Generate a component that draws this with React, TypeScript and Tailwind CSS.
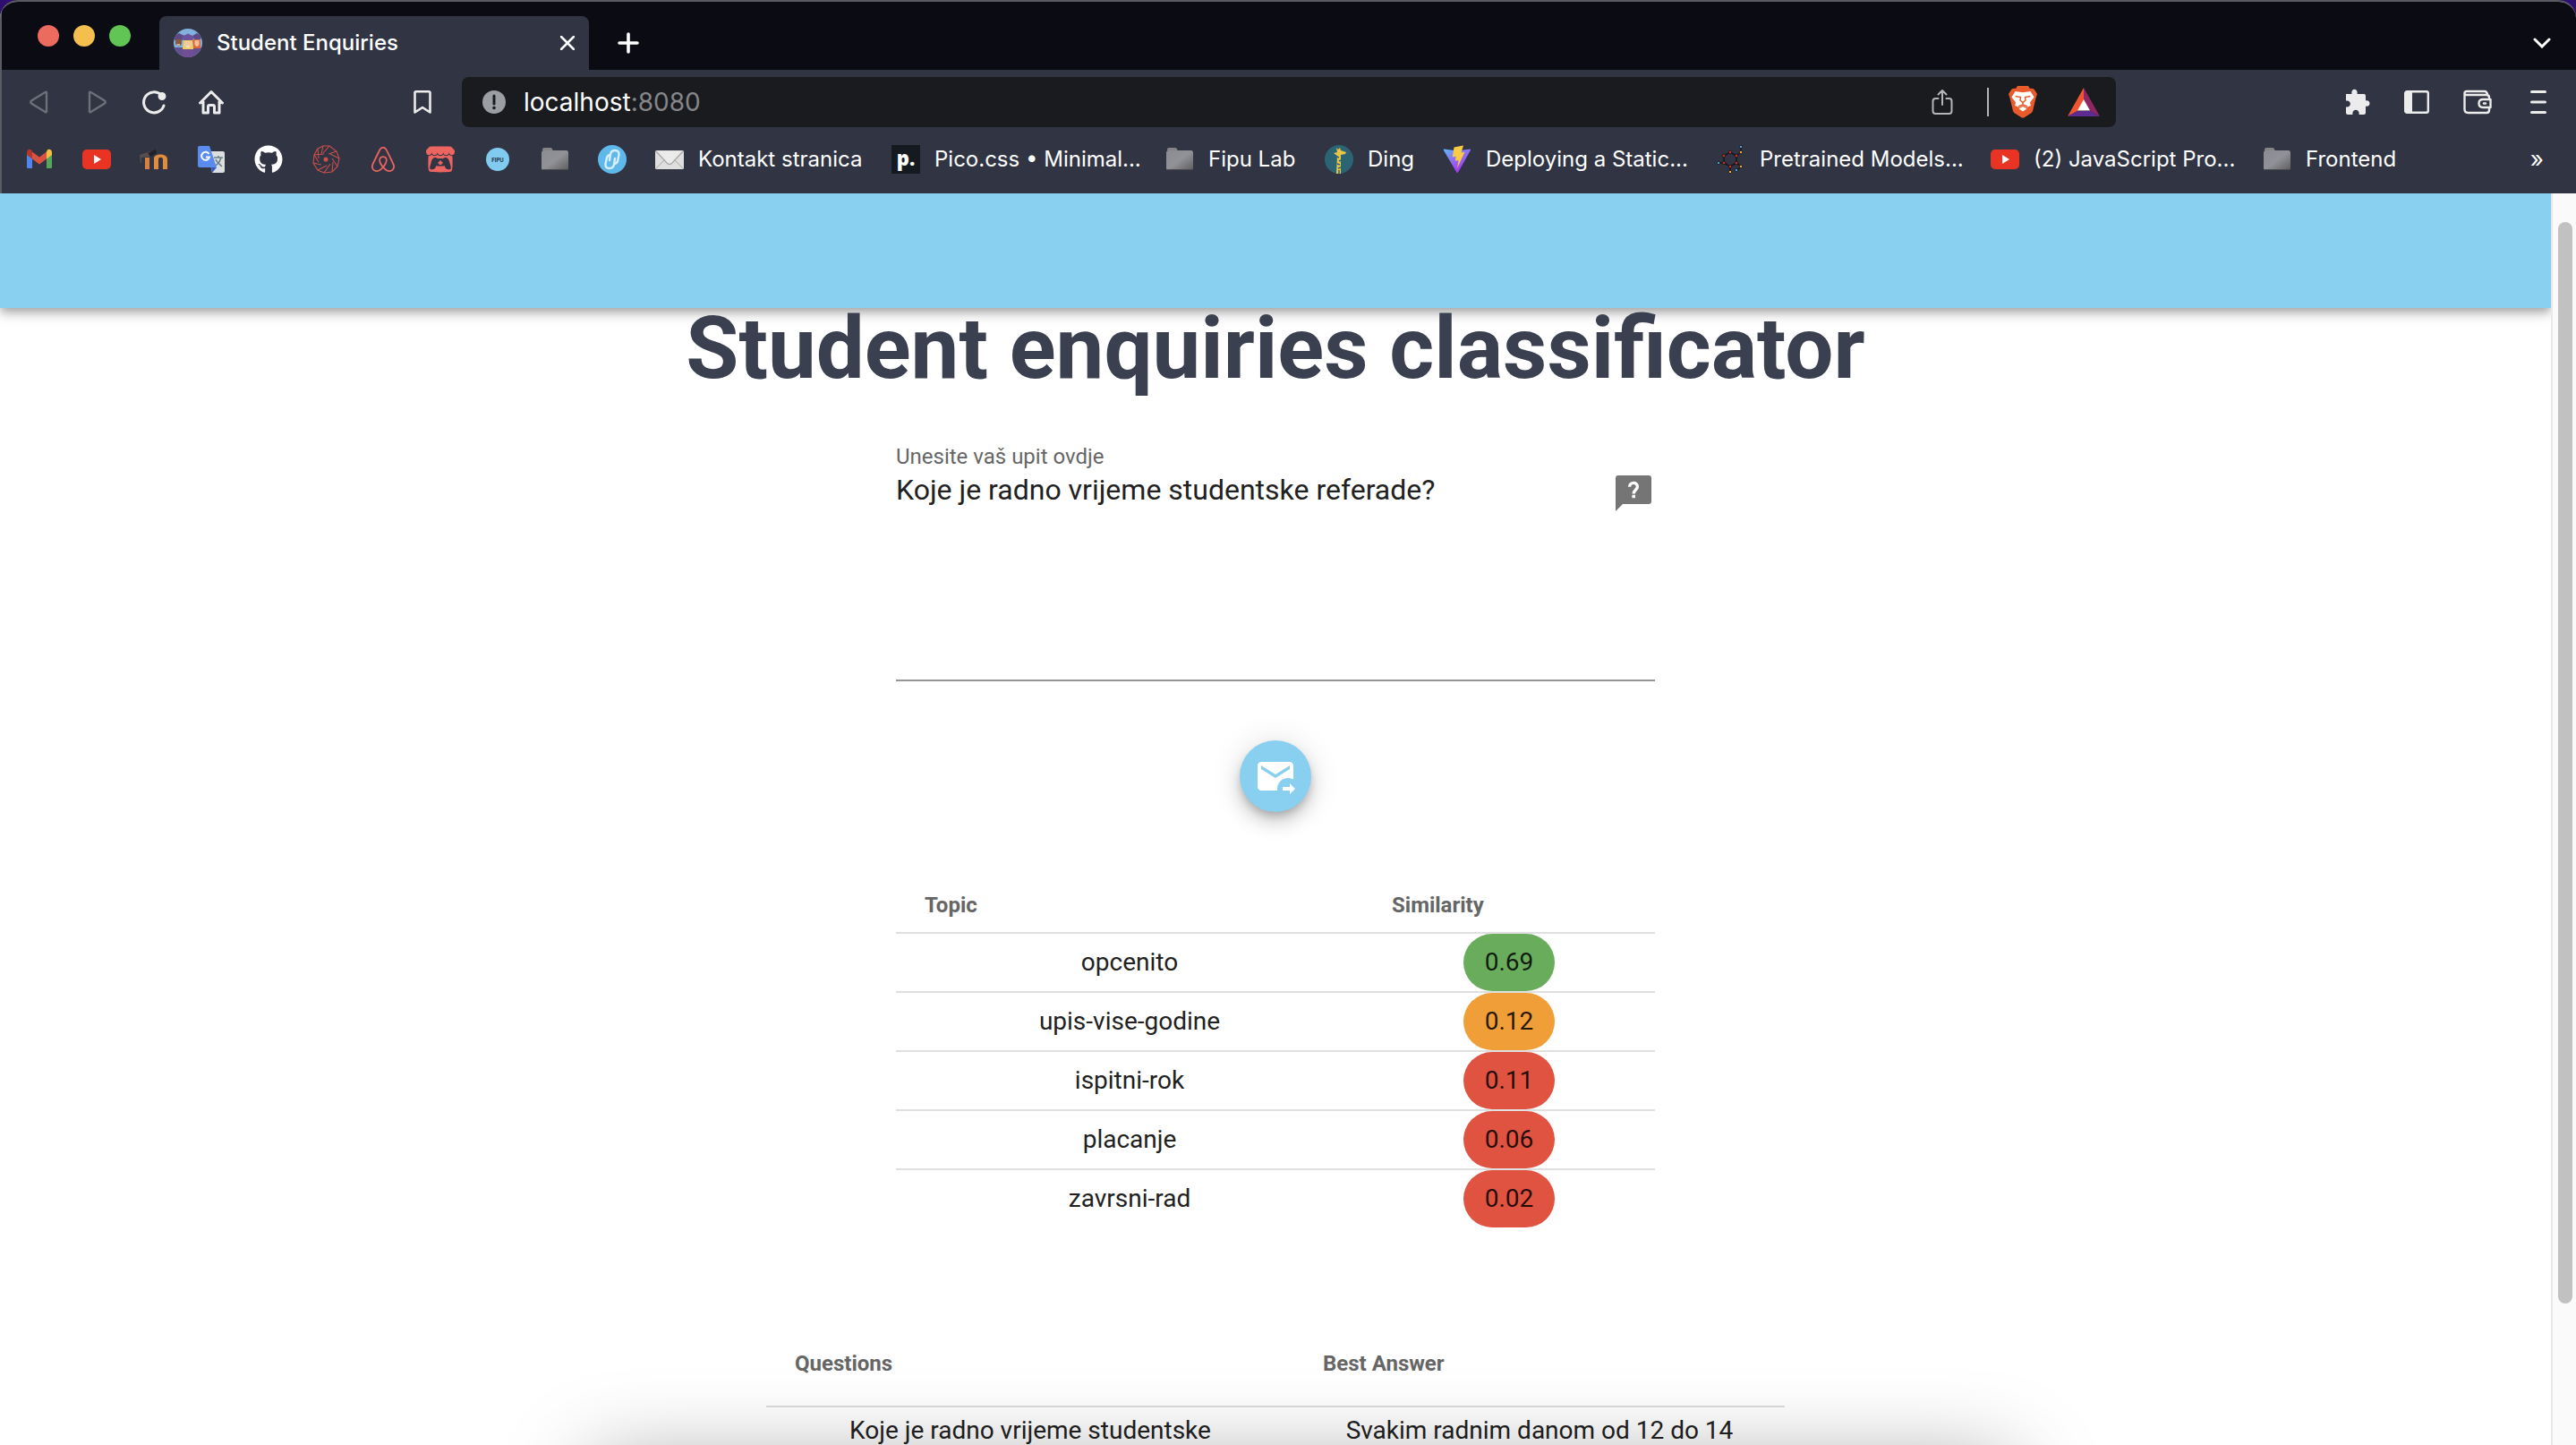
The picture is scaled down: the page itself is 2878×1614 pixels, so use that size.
import React from "react";
import { FaGithub, FaAirbnb } from "react-icons/fa";
import { SiItchdotio } from "react-icons/si";

type Bookmark = { label?: string; name: string; icon: React.ReactNode; width?: string };

const Gmail = () => (
  <svg viewBox="0 0 32 32" className="size-8">
    <path d="M2 9v15.500a1.500 1.500 0 0 0 1.500 1.500H8V13.500z" fill="#5383ec" />
    <path d="M30 9v15.500a1.500 1.500 0 0 1-1.500 1.500H24V13.500z" fill="#58a55c" />
    <path d="M24 7.500v8l6-4.500V8c0-3-3-4.200-5-2.700z" fill="#f1bf42" />
    <path d="M8 15.500v-8l8 6 8-6v8l-8 6z" fill="#d95140" />
    <path d="M2 8v3l6 4.500v-8L7 5.300C5 3.800 2 5 2 8z" fill="#b3362b" />
  </svg>
);

const YouTube = () => (
  <svg viewBox="0 0 32 32" className="size-8">
    <rect x="0" y="5" width="32" height="22" rx="5" fill="#e93323" />
    <path d="M13 11l8 5-8 5z" fill="#fff" />
  </svg>
);

const Moodle = () => (
  <svg viewBox="0 0 32 32" className="size-8">
    <path d="M0 11l12-4 5 2-6 4-9 1v6H1z" fill="#55504f" />
    <path d="M9 9l9-4 1 4-7 4z" fill="#222226" />
    <path d="M6 14h5v13H6z" fill="#d9813a" />
    <path d="M16 27V15c0-6 15-6 15 1v11h-5V16c0-3-5-3-5 0v11z" fill="#e08c3c" />
  </svg>
);

const Translate = () => (
  <svg viewBox="0 0 32 32" className="size-8">
    <path d="M12 7h17a2 2 0 0 1 2 2v20a2 2 0 0 1-2 2H17z" fill="#dcdfe0" />
    <path d="M16 25h6l-5 6z" fill="#3555c4" />
    <path d="M3 1h11l8 24H3a2 2 0 0 1-2-2V3a2 2 0 0 1 2-2z" fill="#5a8bee" />
    <path d="M13.500 10A4.500 4.500 0 1 0 14 13.500H10" fill="none" stroke="#fff" strokeWidth="2" />
    <path d="M19 14h10M24 12v2M27 14c-1 5-4 7-6 9M21 16c1 3 4 5 7 8" fill="none" stroke="#6b8088" strokeWidth="1.600" />
  </svg>
);

const Aperture = () => (
  <svg viewBox="0 0 32 32" className="size-8" fill="none" stroke="#c8504a" strokeWidth="1.100">
    <path d="M13 1h7l8 6 3 8-2 9-6 6-9 1-7-3-5-8 1-9 4-7z" />
    <path d="M13 1l-2 9M20 1l-7 8M28 7l-9 3M31 15l-10-5M29 24l-6-9M23 30l1-11M14 31l7-10M7 28l10-5M2 20l9 2M3 11l5 8M7 4l1 11M3 11l11-1" />
    <circle cx="16" cy="16" r="2" fill="#d9534c" />
  </svg>
);

const Fipu = () => (
  <span className="flex size-8 items-center justify-center">
    <span className="flex size-[26px] items-center justify-center rounded-full bg-[#80cbef] text-[6px] font-bold text-[#22303c]">FIPU</span>
  </span>
);

const Folder = () => (
  <svg viewBox="0 0 32 32" className="size-8">
    <defs>
      <linearGradient id="folder" x1="0" y1="0" x2="1" y2="1">
        <stop offset="0" stopColor="#8b8c91" />
        <stop offset=".5" stopColor="#919297" />
        <stop offset="1" stopColor="#5e5e60" />
      </linearGradient>
    </defs>
    <path d="M2 6V5a2 2 0 0 1 2-2h7a2 2 0 0 1 2 2l1 1z" fill="#858587" />
    <rect x="1" y="6" width="30" height="22" rx="2.500" fill="url(#folder)" />
    <path d="M2 27.500h28" stroke="#4a4a4d" />
  </svg>
);

const LinkBadge = () => (
  <svg viewBox="0 0 32 32" className="size-8">
    <circle cx="16" cy="16" r="16" fill="#5fb8ea" />
    <g fill="none" stroke="#d8effb" strokeWidth="2.400" strokeLinecap="round" strokeLinejoin="round">
      <path d="M13 17l1-7q1-4 5-4 5 0 4.500 5l-1.500 7q-1 3-4 3" />
      <path d="M19 15l-1 7q-1 4-5 4-5 0-4.500-5l1.500-7q1-3 4-3" />
    </g>
  </svg>
);

const Envelope = () => (
  <svg viewBox="0 0 32 32" className="size-8">
    <rect x="0" y="6" width="32" height="21" rx="1.500" fill="#dfdfdf" />
    <path d="M1 26l11-11M31 26L20 15" stroke="#bdbdbd" strokeWidth="1.200" />
    <path d="M1 7l12 13q3 3 6 0L31 7" fill="#ebebeb" stroke="#a9a9a9" strokeWidth="1.400" />
  </svg>
);

const Pico = () => (
  <span className="flex size-8 items-center justify-center bg-[#141a20] pb-1 font-['Noto_Sans',sans-serif] text-[22px] leading-none font-black text-white">p.</span>
);

const Giraffe = () => (
  <svg viewBox="0 0 32 32" className="size-8">
    <circle cx="16" cy="16" r="16" fill="#2c6474" />
    <path d="M13 3l2 2 2-2 1 3 6 2-1 2-5 1 0 9 0 12h-5l1-20-4-3 4-1z" fill="#e8c547" />
    <path d="M14 13l2 1M18 17l-2 1M14 21l3 1M18 25l-3 1M16 28v4" stroke="#2c6474" strokeWidth="1.500" />
  </svg>
);

const Vite = () => (
  <svg viewBox="0 0 32 32" className="size-8">
    <defs>
      <linearGradient id="vite" x1="0" y1="0" x2=".6" y2="1">
        <stop offset="0" stopColor="#5cb8fb" />
        <stop offset=".5" stopColor="#8f6cf5" />
        <stop offset="1" stopColor="#a835ee" />
      </linearGradient>
    </defs>
    <path d="M1.500 4.500l14.500 2 14.500-2q1 .2.500 1.300L17 30.500q-.8 1-1.600 0L.8 5.800Q.5 4.600 1.500 4.500z" fill="url(#vite)" />
    <path d="M12.500 2.500L23 .5l-2.500 8 4-.8L16 26l1.500-9-3.800.8 1-5-4 .8z" fill="#f7cb45" />
  </svg>
);

const Molecule = () => (
  <svg viewBox="0 0 32 32" className="size-8">
    <path d="M15 8l7 4v8l-7 4-7-4v-8zM22 12l5-4V2M22 20l5 4-4 4M15 24v6M8 20H2" fill="none" stroke="#14151b" strokeWidth="1.500" />
    <g fill="#c9302c" stroke="#14151b" strokeWidth=".8">
      <circle cx="15" cy="8" r="1.800" /><circle cx="22" cy="12" r="1.800" /><circle cx="22" cy="20" r="1.800" />
      <circle cx="15" cy="24" r="1.800" /><circle cx="8" cy="20" r="1.800" /><circle cx="8" cy="12" r="1.800" />
    </g>
    <g fill="#f0a93a" stroke="#14151b" strokeWidth=".8">
      <circle cx="27" cy="8" r="1.700" /><circle cx="27" cy="24" r="1.700" /><circle cx="15" cy="30" r="1.700" />
    </g>
    <g fill="#5db4e6" stroke="#14151b" strokeWidth=".8">
      <circle cx="27" cy="2" r="1.600" /><circle cx="2" cy="20" r="1.600" /><circle cx="22" cy="28" r="1.600" />
    </g>
  </svg>
);

const bookmarks: Bookmark[] = [
  { name: "Gmail", icon: <Gmail /> },
  { name: "YouTube", icon: <YouTube /> },
  { name: "Moodle", icon: <Moodle /> },
  { name: "Translate", icon: <Translate /> },
  { name: "GitHub", icon: <FaGithub className="size-8" /> },
  { name: "Aperture", icon: <Aperture /> },
  { name: "Airbnb", icon: <FaAirbnb className="size-8 text-[#ec6560]" /> },
  { name: "Itch", icon: <SiItchdotio className="size-8 text-[#ec6560]" /> },
  { name: "Fipu", icon: <Fipu /> },
  { name: "Folder", icon: <Folder /> },
  { name: "Links", icon: <LinkBadge /> },
  { name: "Kontakt stranica", label: "Kontakt stranica", icon: <Envelope />, width: "w-[184px]" },
  { name: "Pico.css", label: "Pico.css • Minimal...", icon: <Pico />, width: "w-[226px]" },
  { name: "Fipu Lab", label: "Fipu Lab", icon: <Folder />, width: "w-[98px]" },
  { name: "Ding", label: "Ding", icon: <Giraffe />, width: "w-[52px]" },
  { name: "Deploying", label: "Deploying a Static...", icon: <Vite />, width: "w-[226px]" },
  { name: "Pretrained", label: "Pretrained Models...", icon: <Molecule />, width: "w-[226px]" },
  { name: "JavaScript", label: "(2) JavaScript Pro...", icon: <YouTube />, width: "w-[224px]" },
  { name: "Frontend", label: "Frontend", icon: <Folder />, width: "w-[104px]" },
];

const topics = [
  { topic: "opcenito", score: "0.69", color: "bg-[#69ad5c]" },
  { topic: "upis-vise-godine", score: "0.12", color: "bg-[#f09e38]" },
  { topic: "ispitni-rok", score: "0.11", color: "bg-[#e05341]" },
  { topic: "placanje", score: "0.06", color: "bg-[#e05341]" },
  { topic: "zavrsni-rad", score: "0.02", color: "bg-[#e05341]" },
];

function Favicon() {
  return (
    <svg viewBox="0 0 32 32" className="size-8">
      <clipPath id="fav"><circle cx="16" cy="16" r="16" /></clipPath>
      <g clipPath="url(#fav)">
        <rect width="32" height="32" fill="#82b1de" />
        <path d="M0 21h32v11H0z" fill="#65508f" />
        <path d="M21 13q5-4 9 0v9h-8z" fill="#d9663c" />
        <path d="M11 13q5-3 10 0l1 10H10z" fill="#f2d060" />
        <path d="M0 8l6-3 6 3-2 5H1zM21 8l5-3 6 3-2 4h-7z" fill="#5d4a86" />
        <path d="M9 9l7-3.500L23 9l-2 4H11z" fill="#6d539b" />
        <path d="M2 12h7v5q-3.500 5-7 0z" fill="#8a5a3e" />
        <path d="M12.500 14h7v5q-3.500 5-7 0z" fill="#f4c6a2" />
        <path d="M23.500 13h5v5q-2.500 4-5 0z" fill="#f4bd98" />
        <path d="M14.500 20h3" stroke="#fff" strokeWidth="1.200" />
        <path d="M3.500 18h3.500" stroke="#fff" strokeWidth="1" />
        <path d="M8 32l3-9h10l3 9z" fill="#6f4f93" />
      </g>
    </svg>
  );
}

function TabStrip() {
  return (
    <div className="flex h-[76px] items-end bg-[#0b0b14]">
      <div className="flex w-44 gap-4 self-center pl-10">
        <span className="size-6 rounded-full bg-[#ed6a5f]" />
        <span className="size-6 rounded-full bg-[#f5bf4f]" />
        <span className="size-6 rounded-full bg-[#61c554]" />
      </div>
      <div className="flex h-[60px] w-[480px] items-center gap-4 rounded-t-lg bg-[#313442] px-4">
        <Favicon />
        <span className="flex-1 text-[24px] leading-8 font-medium">Student Enquiries</span>
        <button aria-label="Close tab">
          <svg viewBox="0 0 16 16" className="size-4" stroke="#fff" strokeWidth="2.500" strokeLinecap="round"><path d="M1 1l14 14M15 1L1 15" /></svg>
        </button>
      </div>
      <button aria-label="New tab" className="ml-8 self-center pt-4">
        <svg viewBox="0 0 24 24" className="size-6" stroke="#fff" strokeWidth="3.600" strokeLinecap="round"><path d="M12 2v20M2 12h20" /></svg>
      </button>
      <button aria-label="Search tabs" className="mr-7 ml-auto self-center pt-4">
        <svg viewBox="0 0 20 12" className="h-3 w-5" fill="none" stroke="#fff" strokeWidth="3" strokeLinecap="round"><path d="M2 2l8 8 8-8" /></svg>
      </button>
    </div>
  );
}

function Toolbar() {
  return (
    <div className="flex h-[72px] items-center bg-[#313442]">
      <div className="flex w-[514px] items-center gap-8 pr-[34px] pl-[26px]">
        <button aria-label="Back"><svg viewBox="0 0 32 32" className="size-8" fill="none" stroke="#6d6f79" strokeWidth="2.400" strokeLinejoin="round"><path d="M24 5.500v21Q24 28 22.500 27L7 17.500Q5.500 16 7 14.500L22.500 5Q24 4 24 5.500z" /></svg></button>
        <button aria-label="Forward"><svg viewBox="0 0 32 32" className="size-8" fill="none" stroke="#6d6f79" strokeWidth="2.400" strokeLinejoin="round"><path d="M8 5.500v21Q8 28 9.500 27L25 17.500q1.500-1.500 0-3L9.500 5Q8 4 8 5.500z" /></svg></button>
        <button aria-label="Reload"><svg viewBox="0 0 32 32" className="size-8" fill="none" stroke="#ececec" strokeWidth="3" strokeLinecap="round"><path d="M27 20A11.500 11.500 0 1 1 24 8" /><circle cx="25" cy="9.500" r="3.200" fill="#ececec" strokeWidth="2.500" /></svg></button>
        <button aria-label="Home"><svg viewBox="0 0 32 32" className="size-8" fill="none" stroke="#ececec" strokeWidth="3" strokeLinecap="round" strokeLinejoin="round"><path d="M3.500 17L16 4.500 28.500 17M7 15v13h5.500v-7q0-1.500 1.500-1.500h4q1.500 0 1.500 1.500v7H25V15" /></svg></button>
        <button aria-label="Bookmark" className="ml-auto"><svg viewBox="0 0 20 26" className="h-[26px] w-5" fill="none" stroke="#ececec" strokeWidth="2.600" strokeLinejoin="round"><path d="M1.500 24.500v-22Q1.500 1.300 3 1.300h14q1.500 0 1.500 1.200v22L10 19z" /></svg></button>
      </div>
      <div className="flex h-14 w-[1848px] shrink items-center rounded-lg bg-[#1a1b1f] pr-[18px] pl-[23px]">
        <svg viewBox="0 0 26 26" className="mr-5 size-[26px]"><circle cx="13" cy="13" r="13" fill="#9b9fa3" /><path d="M13 6v9" stroke="#1a1b1f" strokeWidth="3" strokeLinecap="round" /><circle cx="13" cy="19.500" r="1.800" fill="#1a1b1f" /></svg>
        <div className="flex-1 text-[28px] leading-9"><span>localhost</span><span className="text-[#85868a]">:8080</span></div>
        <button aria-label="Share" className="mr-[38px]"><svg viewBox="0 0 24 32" className="h-8 w-6" fill="none" stroke="#b4b5b7" strokeWidth="2" strokeLinecap="round" strokeLinejoin="round"><path d="M7.500 12H4.500q-3 0-3 3v11q0 3 3 3h15q3 0 3-3V15q0-3-3-3h-3M12 19V3M7.500 7.500L12 3l4.500 4.500" /></svg></button>
        <span className="mr-[22px] h-8 w-[2px] bg-[#b5b5b8]" />
        <button aria-label="Brave Shields" className="mr-[34px]">
          <svg viewBox="0 0 32 36" className="h-9 w-8">
            <path d="M8 3L10 0h12l2 3q4-1 5.500 2L32 9l-1.500 4.500L27 28q-.5 1.500-2 2.500L17.500 35.300q-1.500.9-3 0L7 30.500Q5.500 29.500 5 28L1.500 13.500 0 9l2.500-4Q4 2 8 3z" fill="#e95b2b" />
            <path d="M11 6.500l5 .8 5-.8 3.500-.5 4 6.500-4.500 6 .8 3.500L20 24l-4-2.500L12 24l-4.800-2L8 18.500l-4.500-6L7.500 6z" fill="#fff" />
            <path d="M16 23l4.500 2.500L16 28.500l-4.500-3z" fill="#fff" />
            <path d="M7.500 11.500l6 1-.5 3.500L16 18.500l3-2.500-.5-3.500 6-1M16 18.500v2.500M11 23l5-2.200 5 2.200" fill="none" stroke="#e95b2b" strokeWidth="1.500" />
          </svg>
        </button>
        <button aria-label="Rewards">
          <svg viewBox="0 0 36 32" className="h-8 w-9">
            <path d="M18 0v14L11 26 0 32z" fill="#f0562f" /><path d="M18 0l18 32-11-6-7-12z" fill="#8f2664" /><path d="M0 32l11-6h14l11 6z" fill="#5e2b92" /><path d="M18 13l7 12.500H11z" fill="#fff" />
          </svg>
        </button>
      </div>
      <div className="flex flex-1 items-center justify-end gap-9 pr-[26px] text-[#ececec]">
        <button aria-label="Extensions"><svg viewBox="-2 0 32 32" className="size-8" fill="currentColor"><path d="M3 7h6.500C8 0 17 0 15.500 7H23q2 0 2 2v5.500c6-1.500 6 7.500 0 6V28q0 2-2 2h-5.500c1.500-7-8.500-7-7 0H5q-2 0-2-2v-6.500c6.500 1 6.500-8 0-7z" /></svg></button>
        <button aria-label="Sidebar" className="flex w-8 justify-center"><svg viewBox="0 0 28 26" className="h-[26px] w-7"><rect x="1.200" y="1.200" width="25.600" height="23.600" rx="2" fill="none" stroke="currentColor" strokeWidth="2.400" /><path d="M1 1h8v24H1z" fill="currentColor" /></svg></button>
        <button aria-label="Wallet"><svg viewBox="0 0 32 28" className="h-7 w-8" fill="none" stroke="currentColor" strokeWidth="2.400" strokeLinecap="round" strokeLinejoin="round"><path d="M29 9q0-3-3-3H4Q1.500 6 1.500 4T4 2h20q2 0 3 3M1.500 4v18q0 4 4 4H26q3 0 3-3v-2M22 11h8.500v9H22q-4.500 0-4.500-4.500T22 11z" /><path d="M23 15.500h2" /></svg></button>
        <button aria-label="Menu" className="flex w-8 justify-center"><svg viewBox="0 0 18 26" className="h-[26px] w-[18px]" stroke="currentColor" strokeWidth="3" strokeLinecap="round"><path d="M1.500 1.500h15M1.500 13h15M1.500 24.500h15" /></svg></button>
      </div>
    </div>
  );
}

function BookmarksBar() {
  return (
    <nav className="flex h-[66px] items-start gap-8 overflow-hidden bg-[#313442] pt-3 pr-9 pl-[26px]">
      {bookmarks.map((b) => (
        <a key={b.name} href="#" aria-label={b.name} className="flex shrink-0 items-center gap-4">
          {b.icon}
          {b.label && <span className={`text-[24px] leading-8 whitespace-nowrap ${b.width}`}>{b.label}</span>}
        </a>
      ))}
      <button aria-label="More bookmarks" className="ml-auto text-[26px] leading-8">»</button>
    </nav>
  );
}

function EnquiryForm() {
  return (
    <form className="mt-[62px] flex w-[848px] max-w-full flex-col items-center" onSubmit={(e) => e.preventDefault()}>
      <label htmlFor="enquiry" className="w-full text-[24px] leading-7 text-[#666666]">Unesite vaš upit ovdje</label>
      <div className="flex w-full items-start border-b-2 border-[#949494]">
        <textarea id="enquiry" rows={5} defaultValue="Koje je radno vrijeme studentske referade?" className="h-[235px] flex-1 resize-none bg-transparent text-[32px] leading-[46px] text-[#212121] outline-none" />
        <svg viewBox="0 0 24 24" className="mt-[3px] size-12">
          <path d="M3.500 2h17A1.500 1.500 0 0 1 22 3.500v13a1.500 1.500 0 0 1-1.500 1.500H6l-4 4V3.500A1.500 1.500 0 0 1 3.500 2z" fill="#757575" />
          <path d="M9.800 8.400C9.800 5.500 14.200 5.500 14.200 8.300c0 1.800-2.100 1.900-2.100 3.900" fill="none" stroke="#fff" strokeWidth="1.700" />
          <path d="M11.200 12.900h1.800v1.700h-1.800z" fill="#fff" />
        </svg>
      </div>
      <button type="submit" aria-label="Send enquiry" className="mt-[66px] flex size-20 items-center justify-center rounded-full bg-[#89cff0] shadow-[0_6px_10px_-2px_rgba(0,0,0,0.2),0_12px_20px_rgba(0,0,0,0.14),0_2px_36px_rgba(0,0,0,0.12)]">
        <svg viewBox="0 0 24 24" className="size-12" fill="#fff">
          <path d="M13 19C13 15.690 15.690 13 19 13C20.100 13 21.120 13.300 22 13.810V6C22 4.890 21.100 4 20 4H4C2.890 4 2 4.890 2 6V18C2 19.110 2.900 20 4 20H13.090C13.040 19.670 13 19.340 13 19M4 8V6L12 11L20 6V8L12 13L4 8M20 22V20H16V18H20V16L23 19L20 22Z" />
        </svg>
      </button>
    </form>
  );
}

function TopicTable() {
  return (
    <table className="mt-[74px] w-[848px] max-w-full table-fixed border-separate border-spacing-0 text-[28px] leading-[42px] text-[#212121]">
      <thead>
        <tr className="text-left text-[24px] leading-7 text-[#666666]">
          <th className="w-[522px] border-b-2 border-[#e0e0e0] px-8 py-4 font-bold">Topic</th>
          <th className="border-b-2 border-[#e0e0e0] px-8 py-4 font-bold">Similarity</th>
        </tr>
      </thead>
      <tbody className="text-center [&>tr:last-child>td]:border-b-0">
        {topics.map((t) => (
          <tr key={t.topic}>
            <td className="border-b-2 border-[#e0e0e0] p-0">{t.topic}</td>
            <td className="border-b-2 border-[#e0e0e0] p-0">
              <span className={`mx-auto flex h-16 w-fit items-center rounded-full px-6 text-black/85 ${t.color}`}>{t.score}</span>
            </td>
          </tr>
        ))}
      </tbody>
    </table>
  );
}

function AnswerTable() {
  return (
    <table className="mt-[105px] w-[1138px] max-w-full shrink-0 table-fixed border-separate border-spacing-0 text-[28px] leading-[52px] text-[#212121]">
      <thead>
        <tr className="text-left text-[24px] leading-7 text-[#666666]">
          <th className="w-[590px] border-b-2 border-[#dcdcdc] px-8 py-[33px] font-bold">Questions</th>
          <th className="border-b-2 border-[#dcdcdc] px-8 py-[33px] font-bold">Best Answer</th>
        </tr>
      </thead>
      <tbody className="text-center">
        <tr>
          <td className="px-8">Koje je radno vrijeme studentske</td>
          <td className="px-8">Svakim radnim danom od 12 do 14</td>
        </tr>
      </tbody>
    </table>
  );
}

export default function App() {
  return (
    <div className="h-screen bg-[#2c0f6e]">
      <div className="relative flex h-full flex-col overflow-hidden rounded-t-[20px] border-t-2 border-[#5a5a62] bg-white font-[Inter,sans-serif] text-white">
        <div className="border-l-2 border-[#5a5a62]">
          <TabStrip />
          <Toolbar />
          <BookmarksBar />
        </div>
        <div className="flex min-h-0 flex-1 font-[Roboto,sans-serif]">
          <main className="flex min-w-0 flex-1 flex-col items-center overflow-hidden bg-white">
            <header className="h-32 w-full shrink-0 bg-[#89cff0] shadow-[0_4px_8px_-2px_rgba(0,0,0,0.2),0_8px_10px_rgba(0,0,0,0.14),0_2px_20px_rgba(0,0,0,0.12)]" />
            <h1 className="text-[96px] leading-[90px] font-bold whitespace-nowrap text-[#3a4050]">Student enquiries classificator</h1>
            <EnquiryForm />
            <TopicTable />
            <AnswerTable />
          </main>
          <div className="w-7 shrink-0 border-l-2 border-[#e8e8e8] bg-[#fafafa] px-[6px] pt-8">
            <div className="h-[calc(100%-158px)] w-4 rounded-full bg-[#c1c1c1]" />
          </div>
        </div>
        <div className="pointer-events-none absolute right-[22%] -bottom-[124px] left-[23%] h-[100px] shadow-[0_0_100px_rgba(0,0,0,0.4)]" />
      </div>
    </div>
  );
}
